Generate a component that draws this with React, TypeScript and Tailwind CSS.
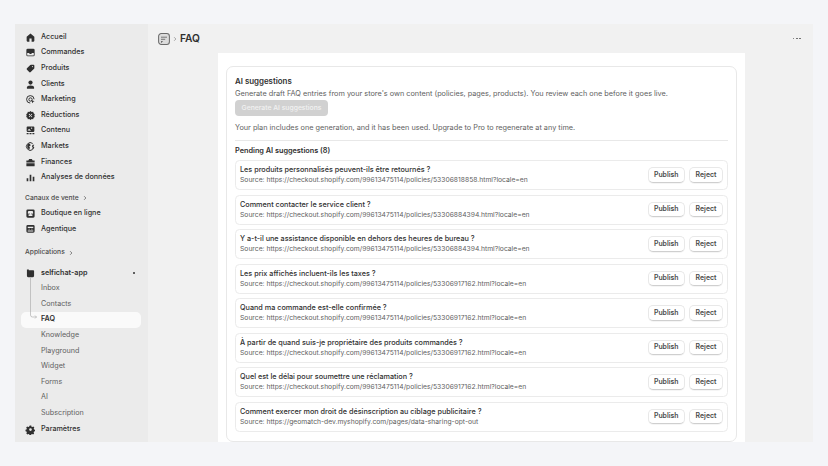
import type { ReactNode } from "react"

const FONT = { fontFamily: "Inter, 'Liberation Sans', sans-serif" }

// small filled nav icons, 20 unit box
const icons: Record<string, ReactNode> = {
  home: <path d="M10 2.500 3 8.500V16a1.500 1.500 0 0 0 1.500 1.500H8V12h4v5.500h3.500A1.500 1.500 0 0 0 17 16V8.500z" />,
  orders: (
    <path fillRule="evenodd" d="M5 3h10a2.500 2.500 0 0 1 2.500 2.500v9A2.500 2.500 0 0 1 15 17H5a2.500 2.500 0 0 1-2.500-2.500v-9A2.500 2.500 0 0 1 5 3m-1 8v3.500A1 1 0 0 0 5 15.500h10a1 1 0 0 0 1-1V11h-3.500l-1 1.500h-3L7.500 11z" />
  ),
  tag: <path d="M11 3h4.500A1.500 1.500 0 0 1 17 4.500V9a2 2 0 0 1-.6 1.400l-6 6a2 2 0 0 1-2.800 0L3.600 12.400a2 2 0 0 1 0-2.800l6-6A2 2 0 0 1 11 3m2.500 2.500a1 1 0 1 0 0 2 1 1 0 0 0 0-2" />,
  person: (
    <>
      <circle cx="10" cy="6.500" r="3.800" />
      <path d="M3.500 15.500c0-2 2-3.500 6.500-3.500s6.500 1.500 6.500 3.500V17.500h-13z" />
    </>
  ),
  target: (
    <>
      <path fill="none" stroke="currentColor" strokeWidth="1.800" d="M16.500 9.500A6.800 6.800 0 1 0 9.500 16.500" />
      <circle cx="10" cy="10" r="3" fill="none" stroke="currentColor" strokeWidth="1.800" />
      <path d="m11 11 6.500 2-2.500 1.200-1.200 2.800z" />
    </>
  ),
  discount: <path fillRule="evenodd" d="M10 2l2.200 1.500 2.600-.1.900 2.500 2.100 1.600-.8 2.500.8 2.500-2.100 1.600-.9 2.500-2.600-.1L10 18l-2.200-1.500-2.600.1-.9-2.500-2.100-1.600.8-2.500-.8-2.500 2.100-1.600.9-2.500 2.600.1zM8 7a1 1 0 1 0 0 2 1 1 0 0 0 0-2m4 4a1 1 0 1 0 0 2 1 1 0 0 0 0-2m.2-4.200L6.800 12.200l1 1 5.400-5.400z" />,
  content: (
    <>
      <path fillRule="evenodd" d="M4.500 2.500h11A1.500 1.500 0 0 1 17 4v7a1.500 1.500 0 0 1-1.500 1.500h-11A1.500 1.500 0 0 1 3 11V4a1.500 1.500 0 0 1 1.500-1.500m7.500 2a1.200 1.200 0 1 0 0 2.400 1.200 1.200 0 0 0 0-2.400M4.500 10l3-3 3.500 3.500z" />
      <path d="M3 14.500h3.500V17H3zM8.200 14.500h3.600V17H8.200zM13.500 14.500H17V17h-3.500z" />
    </>
  ),
  globe: (
    <>
      <path fill="none" stroke="currentColor" strokeWidth="1.800" d="M14 4.500A7 7 0 1 0 14 15.500" />
      <path d="M7 4.500c2 .5 3.500 2 3 4l-2.500 1 1.500 2.500-1 3.500c-2-1-4-3-4-5.500s1-4.500 3-5.500" />
      <path d="M14 7h3l-2 2.500 2 2.500-2 3-2-1 1-2-1.500-2.500z" />
    </>
  ),
  bank: <path d="M7.500 3.500h5L14 6.500h3.500V10h-15V6.500H6zM2.500 11.500h15V16a1 1 0 0 1-1 1h-13a1 1 0 0 1-1-1z" />,
  chart: <path d="M3 11.500h3V17H3zM8.500 5h3v12h-3zM14 8.500h3V17h-3z" />,
  store: (
    <path fillRule="evenodd" d="M5 2.500h10A2.500 2.500 0 0 1 17.500 5v10a2.500 2.500 0 0 1-2.500 2.500H5A2.500 2.500 0 0 1 2.500 15V5A2.500 2.500 0 0 1 5 2.500M6 5.500 5 9a1.600 1.600 0 0 0 3 .5 1.600 1.600 0 0 0 4 0 1.600 1.600 0 0 0 3-.5l-1-3.500zm.500 6v3h7v-3z" />
  ),
  agent: (
    <path fillRule="evenodd" d="M5 3.500h10A2.500 2.500 0 0 1 17.500 6v9a2.500 2.500 0 0 1-2.500 2.500H5A2.500 2.500 0 0 1 2.500 15V6A2.500 2.500 0 0 1 5 3.500M5 7v2h10V7zm1.500 3.500V12h2v-1.500zm5 0V12h2v-1.500zM5 13.500V15.500h10v-2z" />
  ),
  app: <path d="M3.500 2.500H7V4h8a1.500 1.500 0 0 1 1.500 1.500V14a3 3 0 0 1-3 3H6.500a3 3 0 0 1-3-3z" />,
  gear: <path fillRule="evenodd" d="m8.500 2h3l.5 2.200 1.700.8 2-1.100 2 2.200-1.200 1.900.6 1.800 2 .7v3l-2 .7-.7 1.700 1 2-2.100 2.100-2-1-1.700.7-.6 2.200h-3l-.6-2.200-1.700-.7-2 1-2.100-2.100 1-2-.7-1.700-2-.7v-3l2-.7.600-1.800-1.200-1.900 2-2.200 2 1.100 1.700-.8zM10 7.500a2.700 2.700 0 1 0 0 5.400 2.700 2.700 0 0 0 0-5.400" transform="translate(1 1) scale(.9)" />,
}

const mainNav = [
  ["home", "Accueil"],
  ["orders", "Commandes"],
  ["tag", "Produits"],
  ["person", "Clients"],
  ["target", "Marketing"],
  ["discount", "Réductions"],
  ["content", "Contenu"],
  ["globe", "Markets"],
  ["bank", "Finances"],
  ["chart", "Analyses de données"],
]

const subNav = ["Knowledge", "Playground", "Widget", "Forms", "AI", "Subscription"]

const base = "https://checkout.shopify.com/99613475114/policies/"
const suggestions = [
  ["Les produits personnalisés peuvent-ils être retournés ?", base + "53306818858.html?locale=en"],
  ["Comment contacter le service client ?", base + "53306884394.html?locale=en"],
  ["Y a-t-il une assistance disponible en dehors des heures de bureau ?", base + "53306884394.html?locale=en"],
  ["Les prix affichés incluent-ils les taxes ?", base + "53306917162.html?locale=en"],
  ["Quand ma commande est-elle confirmée ?", base + "53306917162.html?locale=en"],
  ["À partir de quand suis-je propriétaire des produits commandés ?", base + "53306917162.html?locale=en"],
  ["Quel est le délai pour soumettre une réclamation ?", base + "53306917162.html?locale=en"],
  ["Comment exercer mon droit de désinscription au ciblage publicitaire ?", "https://geomatch-dev.myshopify.com/pages/data-sharing-opt-out"],
]

function NavIcon({ name }: { name: string }) {
  return (
    <svg viewBox="0 0 20 20" fill="currentColor" className="w-[11px] h-[11px] shrink-0 text-[#303030]">
      {icons[name]}
    </svg>
  )
}

function NavItem({ icon, label }: { icon: string; label: string }) {
  return (
    <div className="flex items-center h-[15.6px] pl-[10px] gap-[5px] text-[7.200px] font-medium text-[#303030]">
      <NavIcon name={icon} />
      <span>{label}</span>
    </div>
  )
}

function SectionLabel({ label }: { label: string }) {
  return (
    <div className="flex items-center h-[15.6px] pl-[10px] gap-[3px] text-[6.700px] font-medium text-[#4a4a4a]">
      <span>{label}</span>
      <svg viewBox="0 0 10 10" className="w-[6px] h-[6px] text-[#616161]" fill="none" stroke="currentColor" strokeWidth="1.300">
        <path d="m3.500 2 3 3-3 3" />
      </svg>
    </div>
  )
}

function Btn({ label, width }: { label: string; width: string }) {
  return (
    <button className={`${width} h-[15.700px] rounded-[5px] bg-white text-[6.900px] font-semibold text-[#4a4a4a] border border-[#e8e8e8] border-b-[#cfcfcf] shadow-[0_1px_0_rgba(0,0,0,0.04)]`}>
      {label}
    </button>
  )
}

export default function App() {
  return (
    <div style={FONT} className="w-[828px] h-[466px] overflow-hidden bg-[#f4f5f8] pt-[24px] px-[15px]">
      <div className="flex h-[418px] bg-[#f1f1f1]">
        {/* Sidebar */}
        <aside className="w-[133px] shrink-0 bg-[#ebebeb] pt-[5.500px]">
          {mainNav.map(([icon, label]) => (
            <NavItem key={label} icon={icon} label={label} />
          ))}

          <div className="mt-[4.500px]">
            <SectionLabel label="Canaux de vente" />
          </div>
          <NavItem icon="store" label="Boutique en ligne" />
          <NavItem icon="agent" label="Agentique" />

          <div className="mt-[8px]">
            <SectionLabel label="Applications" />
          </div>
          <div className="mt-[5px] relative">
            <div className="flex items-center h-[15.6px] pl-[10px] pr-[13px] gap-[5px] text-[7.200px] font-semibold text-[#303030]">
              <NavIcon name="app" />
              <span className="flex-1">selfichat-app</span>
              <span className="w-[2px] h-[2px] bg-[#303030] rounded-full" />
            </div>
            {["Inbox", "Contacts"].map(label => (
              <div key={label} className="h-[15.6px] pl-[26px] flex items-center text-[7.200px] font-normal text-[#616161]">
                {label}
              </div>
            ))}
            <div className="ml-[6px] mr-[7px] h-[15.6px] pl-[20px] flex items-center rounded-[5px] bg-[#fafafa] text-[7.200px] font-semibold text-[#303030]">
              FAQ
            </div>
            {/* tree connector */}
            <svg className="absolute left-[12px] top-[13px] w-[24px] h-[46px] text-[#b0b0b0]" viewBox="0 0 24 46" fill="none" stroke="currentColor" strokeWidth="0.700">
              <path d="M3.500 0v37q0 2 2 2h4M8 37.500l1.500 1.500-1.500 1.500" />
            </svg>
            {subNav.map(label => (
              <div key={label} className="h-[15.6px] pl-[26px] flex items-center text-[7.200px] font-normal text-[#616161]">
                {label}
              </div>
            ))}
            <NavItem icon="gear" label="Paramètres" />
          </div>
        </aside>

        {/* Main */}
        <main className="flex-1 flex flex-col min-w-0">
          <header className="h-[29px] shrink-0 flex items-center pl-[10px] pr-[12px]">
            <svg viewBox="0 0 20 20" className="w-[12px] h-[12px] text-[#6b6b6b]" fill="none" stroke="currentColor">
              <rect x="1" y="1" width="18" height="18" rx="4.500" fill="#dcdcdc" strokeWidth="1.700" />
              <path d="M5 7h10M5 10.500h7" strokeWidth="1.500" />
              <path d="M5 13.500h3.500L5 17z" fill="#6b6b6b" stroke="none" />
            </svg>
            <svg viewBox="0 0 10 10" className="w-[6px] h-[6px] mx-[2px] text-[#8a8a8a]" fill="none" stroke="currentColor" strokeWidth="1.200">
              <path d="m3.500 2 3 3-3 3" />
            </svg>
            <span className="text-[10.200px] font-semibold text-[#303030]">FAQ</span>
            <div className="ml-auto flex gap-[1.500px]">
              <span className="w-[1.800px] h-[1.800px] bg-[#616161] rounded-full" />
              <span className="w-[1.800px] h-[1.800px] bg-[#616161] rounded-full" />
              <span className="w-[1.800px] h-[1.800px] bg-[#616161] rounded-full" />
            </div>
          </header>

          <div className="ml-[70px] w-[527px] flex-1 bg-white px-[8px] pt-[13px]">
            <section className="h-[376px] rounded-[7px] border border-[#e8e8e8] bg-white px-[8px] pt-[8px] text-[#303030]">
              <h2 className="text-[7.900px] leading-[12px] font-semibold">AI suggestions</h2>
              <p className="mt-[1px] text-[7.300px] leading-[12px] text-[#616161]">
                Generate draft FAQ entries from your store's own content (policies, pages, products). You review each one before it goes live.
              </p>
              <button className="block w-[93px] h-[16px] rounded-[4px] bg-[#d1d1d1] text-[6.800px] font-medium text-[#f2f2f2]">
                Generate AI suggestions
              </button>
              <p className="mt-[6px] text-[7.300px] leading-[12px] text-[#616161]">
                Your plan includes one generation, and it has been used. Upgrade to Pro to regenerate at any time.
              </p>
              <div className="mt-[5.500px] border-t border-[#e8e8e8]" />
              <h3 className="mt-[4px] text-[7.300px] leading-[12px] font-semibold">Pending AI suggestions (8)</h3>
              <ul className="mt-[3.500px] flex flex-col gap-[4.500px]">
                {suggestions.map(([question, url]) => (
                  <li key={question} className="h-[30px] flex items-center justify-between rounded-[4.500px] border border-[#ebebeb] pl-[4px] pr-[4px]">
                    <div className="min-w-0">
                      <div className="text-[7.240px] leading-[10px] font-medium text-[#303030]">{question}</div>
                      <div className="text-[6.760px] leading-[10px] text-[#616161]">Source: {url}</div>
                    </div>
                    <div className="flex gap-[4px] shrink-0">
                      <Btn label="Publish" width="w-[37.500px]" />
                      <Btn label="Reject" width="w-[34px]" />
                    </div>
                  </li>
                ))}
              </ul>
            </section>
          </div>
        </main>
      </div>
    </div>
  )
}
